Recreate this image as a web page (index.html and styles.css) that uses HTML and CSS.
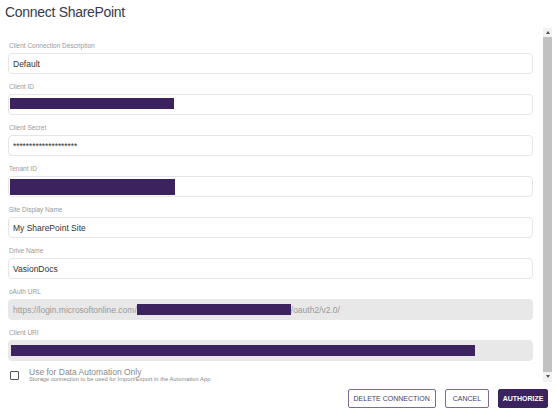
FILE: index.html
```html
<!DOCTYPE html>
<html>
<head>
    <title>Connect SharePoint</title>
    <link rel="stylesheet" href="styles.css">
</head>
<body>
    <div class="dialog">
        <h1 class="dialog-title">Connect SharePoint</h1>

        <div class="dialog-body">
            <div class="form-scroll">
                <div class="field">
                    <label>Client Connection Description</label>
                    <div class="input">Default</div>
                </div>
                <div class="field">
                    <label>Client ID</label>
                    <div class="input input-redacted"><span class="redact redact-id"></span></div>
                </div>
                <div class="field">
                    <label>Client Secret</label>
                    <div class="input input-secret">********************</div>
                </div>
                <div class="field">
                    <label>Tenant ID</label>
                    <div class="input input-redacted"><span class="redact redact-tenant"></span></div>
                </div>
                <div class="field">
                    <label>Site Display Name</label>
                    <div class="input">My SharePoint Site</div>
                </div>
                <div class="field">
                    <label>Drive Name</label>
                    <div class="input">VasionDocs</div>
                </div>
                <div class="field">
                    <label>oAuth URL</label>
                    <div class="input input-disabled">https://login.microsoftonline.com/<span class="redact redact-oauth"></span>/oauth2/v2.0/</div>
                </div>
                <div class="field">
                    <label>Client URI</label>
                    <div class="input input-disabled input-redacted"><span class="redact redact-uri"></span></div>
                </div>

                <div class="check-row">
                    <span class="checkbox"></span>
                    <div class="check-text">
                        <div class="check-title">Use for Data Automation Only</div>
                        <div class="check-sub">Storage connection to be used for Import/Export in the Automation App</div>
                    </div>
                </div>
            </div>

            <div class="scrollbar">
                <span class="arrow arrow-up"></span>
                <span class="thumb"></span>
                <span class="arrow arrow-down"></span>
            </div>
        </div>

        <div class="dialog-footer">
            <button class="btn btn-outline">DELETE CONNECTION</button>
            <button class="btn btn-outline btn-cancel">CANCEL</button>
            <button class="btn btn-primary">AUTHORIZE</button>
        </div>
    </div>
</body>
</html>
```

FILE: styles.css
```css
body {
    margin: 0;
    font-family: "Liberation Sans", Arial, sans-serif;
    background-color: #fff;
}

.dialog {
    width: 556px;
    height: 414px;
    display: flex;
    flex-direction: column;
}

.dialog-title {
    margin: 0;
    height: 28px;
    padding: 4px 0 0 5px;
    box-sizing: border-box;
    font-size: 14px;
    font-weight: normal;
    letter-spacing: -0.3px;
    color: #363b4a;
}

.dialog-body {
    display: flex;
    height: 354px;
}

.form-scroll {
    flex: 1;
    overflow: hidden;
    padding: 14px 10px 0 8px;
}

.field {
    margin-bottom: 9px;
}

.field label {
    display: block;
    height: 8px;
    line-height: 8px;
    margin-bottom: 3px;
    padding-left: 1px;
    font-size: 6.5px;
    color: #9a9a9a;
}

.input {
    height: 21px;
    box-sizing: border-box;
    border: 1px solid #e6e6e6;
    border-radius: 4px;
    padding: 0 4px;
    display: flex;
    align-items: center;
    font-size: 8.5px;
    color: #333;
    white-space: nowrap;
}

.input-secret {
    letter-spacing: -0.1px;
}

.input-disabled {
    background-color: #e8e8e8;
    border-color: #e8e8e8;
    color: #999;
}

.input-redacted {
    padding-left: 1px;
}

.redact {
    display: inline-block;
    background-color: #3d2260;
}

.redact-id {
    width: 164px;
    height: 11px;
    margin-top: -2px;
}

.redact-tenant {
    width: 165px;
    height: 16px;
}

.redact-oauth {
    width: 154px;
    height: 11px;
}

.redact-uri {
    width: 464px;
    height: 11px;
    margin-left: 1px;
}

.check-row {
    display: flex;
    align-items: flex-start;
    margin-top: -2px;
    padding: 0 2px;
}

.checkbox {
    width: 7px;
    height: 7px;
    margin-top: 3px;
    border: 1.5px solid #555;
    border-radius: 1px;
    margin-right: 10px;
}

.check-title {
    font-size: 8.5px;
    line-height: 8px;
    color: #8a8a8a;
}

.check-sub {
    font-size: 5.8px;
    line-height: 6px;
    color: #8a8a8a;
}

.scrollbar {
    width: 9px;
    margin-right: 4px;
    background-color: #f1f1f1;
    display: flex;
    flex-direction: column;
    align-items: center;
}

.thumb {
    width: 9px;
    flex: 1;
    background-color: #c1c1c1;
}

.arrow {
    width: 0;
    height: 0;
    border-left: 2.5px solid transparent;
    border-right: 2.5px solid transparent;
    margin: 3px 0;
}

.arrow-up {
    border-bottom: 3px solid #505050;
}

.arrow-down {
    border-top: 3px solid #505050;
    margin-bottom: 4px;
}

.dialog-footer {
    display: flex;
    justify-content: flex-end;
    gap: 9px;
    padding: 7px 8px 0 0;
}

.btn {
    height: 19px;
    padding: 0 5px;
    font-family: "Liberation Sans", Arial, sans-serif;
    font-size: 7px;
    border-radius: 2px;
    cursor: pointer;
}

.btn-outline {
    background-color: #fff;
    border: 1px solid #7d6a9a;
    color: #4a3e5e;
}

.btn-cancel {
    padding: 0 7px;
}

.btn-primary {
    background-color: #3d2260;
    border: 1px solid #3d2260;
    color: #fff;
    font-weight: bold;
    padding: 0 3.5px;
}
```
